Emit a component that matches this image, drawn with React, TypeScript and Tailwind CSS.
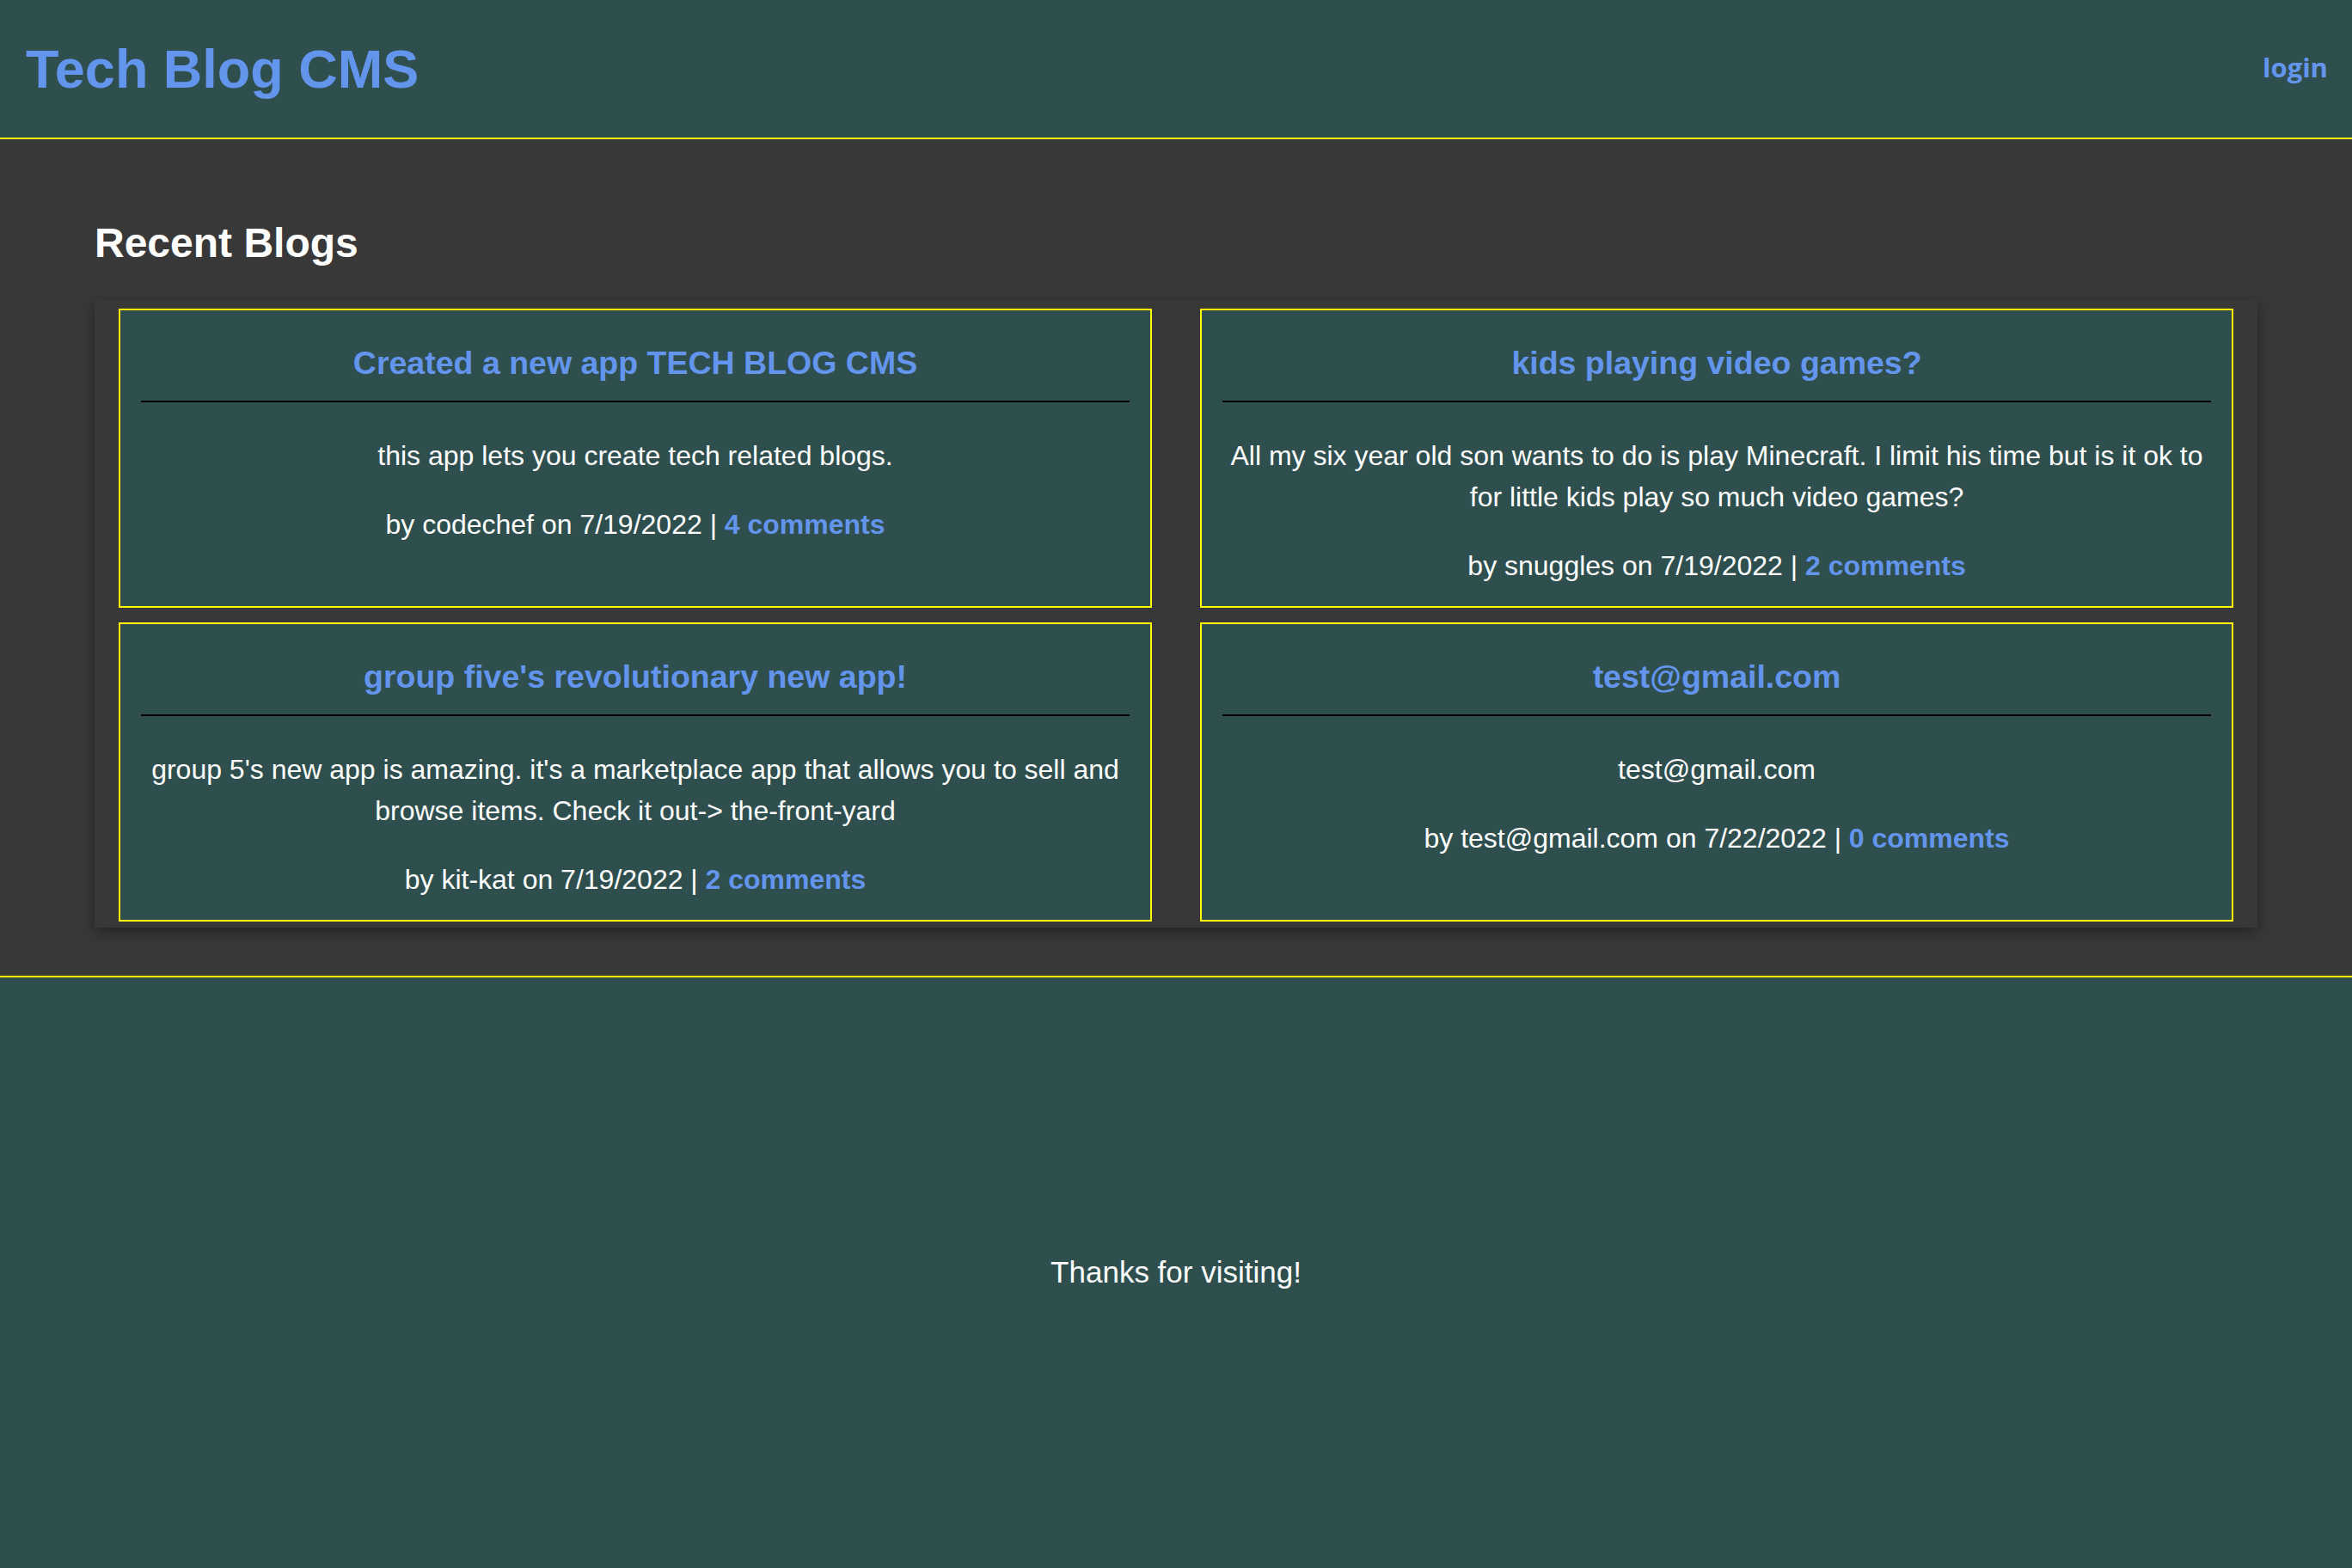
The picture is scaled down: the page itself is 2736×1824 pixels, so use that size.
import React from "react";

type Blog = {
  title: string;
  body: string;
  author: string;
  date: string;
  comments: number;
};

const blogs: Blog[] = [
  {
    title: "Created a new app TECH BLOG CMS",
    body: "this app lets you create tech related blogs.",
    author: "codechef",
    date: "7/19/2022",
    comments: 4,
  },
  {
    title: "kids playing video games?",
    body: "All my six year old son wants to do is play Minecraft. I limit his time but is it ok to for little kids play so much video games?",
    author: "snuggles",
    date: "7/19/2022",
    comments: 2,
  },
  {
    title: "group five's revolutionary new app!",
    body: "group 5's new app is amazing. it's a marketplace app that allows you to sell and browse items. Check it out-> the-front-yard",
    author: "kit-kat",
    date: "7/19/2022",
    comments: 2,
  },
  {
    title: "test@gmail.com",
    body: "test@gmail.com",
    author: "test@gmail.com",
    date: "7/22/2022",
    comments: 0,
  },
];

function Card({ blog }: { blog: Blog }) {
  return (
    <div className="bg-[#2f4f4f] border-2 border-[#ffff00] px-[24px] pb-[23px] text-center">
      <h3 className="mt-[33px] text-[37.5px] leading-[56px] font-bold text-[#6495ed]">
        {blog.title}
      </h3>
      <div className="mt-[16px] h-[2px] bg-black" />
      <p className="mt-[38px] text-[32px] leading-[48px] text-white">{blog.body}</p>
      <p className="mt-[32px] text-[32px] leading-[48px] text-white">
        by {blog.author} on {blog.date} |{" "}
        <a href="#" className="font-bold text-[#6495ed]">
          {blog.comments} comments
        </a>
      </p>
    </div>
  );
}

export default function App() {
  return (
    <div className="min-h-[1824px] flex flex-col font-['Liberation_Sans',Arial,sans-serif]">
      <header className="h-[162px] shrink-0 bg-[#2f4f4f] border-b-2 border-[#ffff00] flex items-center justify-between pl-[30px] pr-[28px]">
        <h1 className="text-[63px] leading-none font-bold text-[#6495ed]">Tech Blog CMS</h1>
        <a href="#" className="mb-[4px] font-['Open_Sans',sans-serif] text-[31px] font-bold text-[#6495ed]">
          login
        </a>
      </header>
      <main className="bg-[#383838] pt-[85px] pb-[56px] px-[110px]">
        <h2 className="text-[48px] leading-[72px] font-bold text-white">Recent Blogs</h2>
        <div className="mt-[30px] shadow-[0_6px_14px_rgba(0,0,0,0.35)] grid grid-cols-2 gap-x-[56px] gap-y-[17px] px-[28px] pt-[10px] pb-[7px]">
          {blogs.map((b, i) => (
            <Card key={i} blog={b} />
          ))}
        </div>
      </main>
      <footer className="flex-1 bg-[#2f4f4f] border-t-2 border-[#ffff00] flex items-center justify-center">
        <p className="text-[35px] text-white">Thanks for visiting!</p>
      </footer>
    </div>
  );
}
